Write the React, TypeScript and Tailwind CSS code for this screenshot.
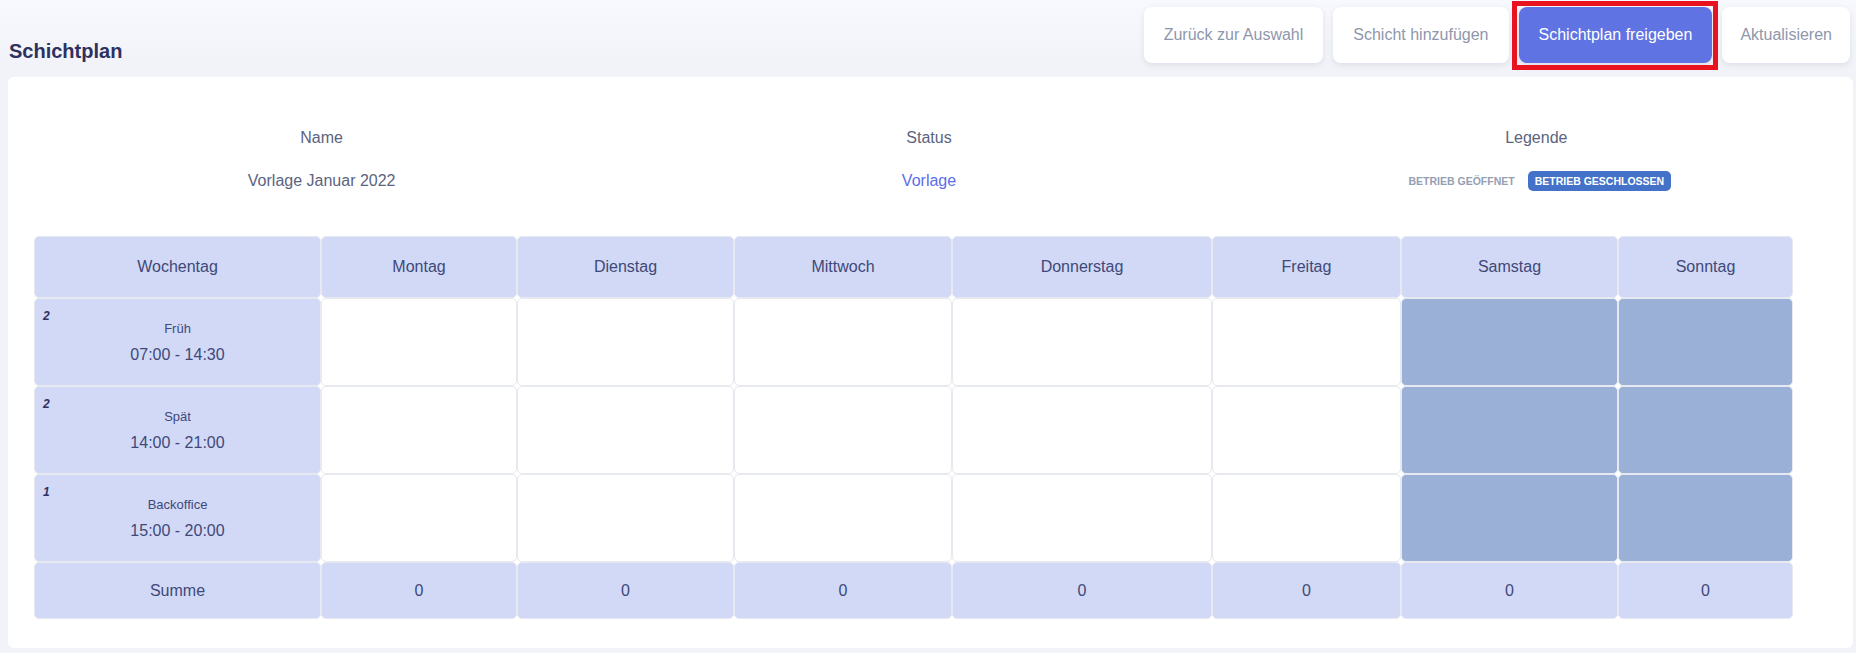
import React from "react";

const DAYS = ["Montag", "Dienstag", "Mittwoch", "Donnerstag", "Freitag", "Samstag", "Sonntag"];

const SHIFTS = [
  { count: 2, name: "Früh", time: "07:00 - 14:30" },
  { count: 2, name: "Spät", time: "14:00 - 21:00" },
  { count: 1, name: "Backoffice", time: "15:00 - 20:00" },
];

// Spaltenbreiten wie im Original (Wochentag + 7 Tage)
const GRID = "grid grid-cols-[287px_196px_217px_218px_260px_189px_217px_175px]";

const cell = "border border-[#e7e9f0] rounded-[5px] flex items-center justify-center";
const head = `${cell} bg-[#d2d9f6] text-[#404879] text-[16px]`;

function Button({ label, primary, tight }: { label: string; primary?: boolean; tight?: boolean }) {
  return (
    <button
      className={
        "h-[56px] rounded-lg text-[16px] shadow-[0_2px_6px_rgba(40,50,90,0.10)] " +
        (tight ? "px-[18px] " : "px-[20px] ") +
        (primary ? "bg-[#5f73e3] text-white" : "bg-white text-[#8e97ab]")
      }
    >
      {label}
    </button>
  );
}

export default function App() {
  return (
    <div className="min-h-screen w-full bg-[#f1f3f8] font-['Liberation_Sans',Arial,sans-serif]">
      <div className="flex items-end justify-between pl-[9px] pr-[6px] pt-[7px] bg-gradient-to-b from-[#f8f9fe] to-[#f1f3f8]">
        <h1 className="text-[20px] font-bold text-[#2e3160] mb-[0px] leading-[24px]">Schichtplan</h1>
        <div className="flex gap-[10px]">
          <Button label="Zurück zur Auswahl" />
          <Button label="Schicht hinzufügen" />
          <div className="relative">
            <Button label="Schichtplan freigeben" primary />
            <div className="absolute -left-[7px] -right-[6px] -top-[6px] -bottom-[7px] border-[5px] border-[#e8131f] pointer-events-none" />
          </div>
          <Button label="Aktualisieren" tight />
        </div>
      </div>

      <div className="mt-[14px] ml-[8px] mr-[3px] bg-white rounded-md pt-[51px] pb-[29px]">
        <div className="grid grid-cols-3 pl-[10px] pr-[13px] text-[16px] leading-[20px] text-[#5b6380] text-center">
          <div>
            <div>Name</div>
            <div className="mt-[23px]">Vorlage Januar 2022</div>
          </div>
          <div>
            <div>Status</div>
            <div className="mt-[23px] text-[#5b6ee8]">Vorlage</div>
          </div>
          <div>
            <div>Legende</div>
            <div className="mt-[23px] flex justify-center gap-[6px] text-[10.5px] font-bold uppercase">
              <span className="px-[7px] h-[20px] flex items-center text-[#95a0b3]">Betrieb geöffnet</span>
              <span className="px-[7px] h-[20px] flex items-center rounded-[5px] bg-[#4472c8] text-white">Betrieb geschlossen</span>
            </div>
          </div>
        </div>

        <div className={`${GRID} ml-[26px] mt-[45px] w-fit`}>
          <div className={`${head} h-[62px]`}>Wochentag</div>
          {DAYS.map((d) => (
            <div key={d} className={`${head} h-[62px]`}>{d}</div>
          ))}

          {SHIFTS.map((s) => (
            <React.Fragment key={s.name}>
              <div className={`${cell} relative h-[88px] bg-[#d2d9f6] text-[#404879] flex-col`}>
                <span className="absolute left-[8px] top-[8px] text-[12px] font-bold italic text-[#2e3160]">{s.count}</span>
                <span className="text-[13px] leading-[16px] mt-[2px]">{s.name}</span>
                <span className="text-[16px] leading-[20px] mt-[8px]">{s.time}</span>
              </div>
              {DAYS.map((d, i) => (
                <div key={d} className={`${cell} h-[88px] ${i >= 5 ? "bg-[#9ab0d6]" : "bg-white"}`} />
              ))}
            </React.Fragment>
          ))}

          <div className={`${head} h-[57px]`}>Summe</div>
          {DAYS.map((d) => (
            <div key={d} className={`${head} h-[57px] text-[#4a5288]`}>0</div>
          ))}
        </div>
      </div>
    </div>
  );
}
